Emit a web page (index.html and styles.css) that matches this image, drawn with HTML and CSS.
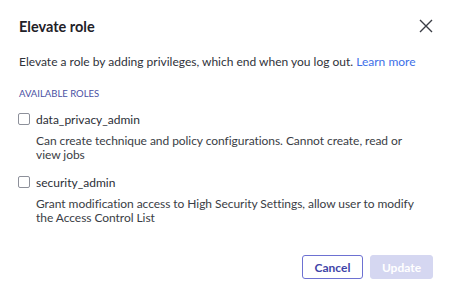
FILE: index.html
```html
<!DOCTYPE html>
<html>
<head>
<meta charset="utf-8">
<link rel="stylesheet" href="styles.css">
</head>
<body>
<div class="dialog">
  <div class="header">
    <h1 class="title">Elevate role</h1>
    <button class="close" aria-label="Close">
      <svg width="14" height="14" viewBox="0 0 14 14"><path d="M1 1L13 13M13 1L1 13" stroke="#3a3d45" stroke-width="1.4" fill="none"/></svg>
    </button>
  </div>
  <p class="intro">Elevate a role by adding privileges, which end when you log out. <a class="link" href="#">Learn more</a></p>
  <div class="section-label">AVAILABLE ROLES</div>
  <div class="roles">
    <div class="role">
      <label class="role-head"><span class="box"></span><span class="role-name">data_privacy_admin</span></label>
      <div class="role-desc">Can create technique and policy configurations. Cannot create, read or view jobs</div>
    </div>
    <div class="role">
      <label class="role-head"><span class="box"></span><span class="role-name">security_admin</span></label>
      <div class="role-desc">Grant modification access to High Security Settings, allow user to modify the Access Control List</div>
    </div>
  </div>
  <div class="footer">
    <button class="btn btn-secondary">Cancel</button>
    <button class="btn btn-primary" disabled>Update</button>
  </div>
</div>
</body>
</html>
```

FILE: styles.css
```css
* { box-sizing: border-box; }
html, body { margin: 0; padding: 0; background: #fff; }
body { font-family: Lato, "Open Sans", sans-serif; color: #2b2e36; width: 450px; height: 296px; overflow: hidden; }
.dialog { padding: 15px 17px 0 19px; display: flex; flex-direction: column; height: 296px; }
.header { display: flex; justify-content: space-between; align-items: center; height: 22px; }
.title { margin: 0; font-size: 14.5px; font-weight: 700; color: #1f2128; }
.close { border: 0; background: none; padding: 0; width: 14px; height: 14px; display: flex; cursor: pointer; }
.intro { margin: 17px 0 0; font-size: 12px; line-height: 15px; color: #2f323a; white-space: nowrap; }
.link { color: #3d6fe8; text-decoration: none; }
.section-label { margin-top: 19px; font-size: 9.5px; line-height: 12px; color: #4a4fa3; }
.roles { display: flex; flex-direction: column; gap: 12px; margin-top: 11px; }
.role { display: flex; flex-direction: column; }
.role-head { display: flex; align-items: center; gap: 6px; height: 16px; margin-left: -1px; }
.box { width: 12px; height: 12px; border: 1px solid #8d909a; border-radius: 2px; background: #fff; }
.role-name { font-size: 12px; color: #2b2e36; }
.role-desc { margin: 7px 0 0 17px; font-size: 12px; line-height: 14px; color: #3a3d45; letter-spacing: -0.05px; padding-right: 13px; }
.footer { margin-top: auto; margin-bottom: 17px; display: flex; justify-content: flex-end; gap: 7px; }
.btn { font-family: Lato, "Open Sans", sans-serif; font-size: 12px; font-weight: 700; height: 24px; border-radius: 3px; padding: 0; }
.btn-secondary { background: #fff; border: 1px solid #6d71d2; color: #3f44a8; width: 61px; }
.btn-primary { background: #d5d7f1; border: 1px solid #d5d7f1; color: #fff; width: 63px; }
```
